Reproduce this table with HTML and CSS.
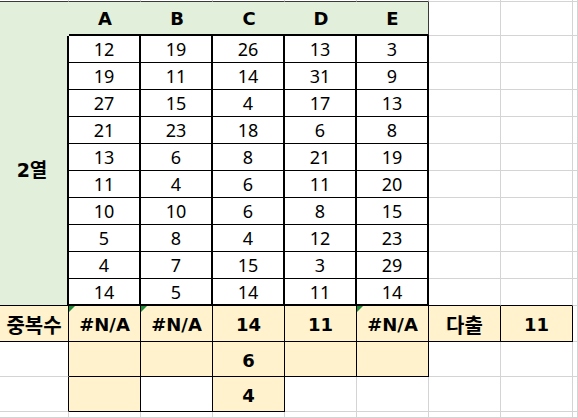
FILE: index.html
```html
<!DOCTYPE html>
<html lang="ko">
<head>
<meta charset="utf-8">
<title>Sheet</title>
<link rel="stylesheet" href="styles.css">
</head>
<body>
<div class="sheet">
  <!-- top strip -->
  <div class="c top dk"></div><div class="c top dk"></div><div class="c top dk"></div><div class="c top dk"></div><div class="c top dk"></div><div class="c top dk"></div><div class="c top"></div><div class="c top"></div><div class="c top"></div>
  <!-- header -->
  <div class="c g hl"></div>
  <div class="c g hd">A</div><div class="c g hd">B</div><div class="c g hd">C</div><div class="c g hd">D</div><div class="c g hd hde">E</div>
  <div class="c"></div><div class="c"></div><div class="c"></div>
  <!-- data rows -->
  <div class="c g lab">2열</div>
  <div class="c d">12</div><div class="c d">19</div><div class="c d">26</div><div class="c d">13</div><div class="c d">3</div><div class="c"></div><div class="c"></div><div class="c"></div>
  <div class="c d">19</div><div class="c d">11</div><div class="c d">14</div><div class="c d">31</div><div class="c d">9</div><div class="c"></div><div class="c"></div><div class="c"></div>
  <div class="c d">27</div><div class="c d">15</div><div class="c d">4</div><div class="c d">17</div><div class="c d">13</div><div class="c"></div><div class="c"></div><div class="c"></div>
  <div class="c d">21</div><div class="c d">23</div><div class="c d">18</div><div class="c d">6</div><div class="c d">8</div><div class="c"></div><div class="c"></div><div class="c"></div>
  <div class="c d">13</div><div class="c d">6</div><div class="c d">8</div><div class="c d">21</div><div class="c d">19</div><div class="c"></div><div class="c"></div><div class="c"></div>
  <div class="c d">11</div><div class="c d">4</div><div class="c d">6</div><div class="c d">11</div><div class="c d">20</div><div class="c"></div><div class="c"></div><div class="c"></div>
  <div class="c d">10</div><div class="c d">10</div><div class="c d">6</div><div class="c d">8</div><div class="c d">15</div><div class="c"></div><div class="c"></div><div class="c"></div>
  <div class="c d">5</div><div class="c d">8</div><div class="c d">4</div><div class="c d">12</div><div class="c d">23</div><div class="c"></div><div class="c"></div><div class="c"></div>
  <div class="c d">4</div><div class="c d">7</div><div class="c d">15</div><div class="c d">3</div><div class="c d">29</div><div class="c"></div><div class="c"></div><div class="c"></div>
  <div class="c d dl">14</div><div class="c d dl">5</div><div class="c d dl">14</div><div class="c d dl">11</div><div class="c d dl">14</div><div class="c bb"></div><div class="c bb"></div><div class="c"></div>
  <!-- summary row -->
  <div class="c y kor">중복수</div>
  <div class="c y err">#N/A</div><div class="c y err">#N/A</div><div class="c y">14</div><div class="c y">11</div><div class="c y err">#N/A</div>
  <div class="c y kor">다출</div><div class="c y">11</div><div class="c"></div>
  <!-- extra rows -->
  <div class="c rb"></div>
  <div class="c y"></div><div class="c y"></div><div class="c y">6</div><div class="c y"></div><div class="c y"></div>
  <div class="c"></div><div class="c"></div><div class="c"></div>
  <div class="c rb"></div>
  <div class="c y"></div><div class="c bx"></div><div class="c y">4</div><div class="c"></div><div class="c"></div>
  <div class="c"></div><div class="c"></div><div class="c"></div>
  <div class="c"></div><div class="c"></div><div class="c"></div><div class="c"></div><div class="c"></div><div class="c"></div><div class="c"></div><div class="c"></div><div class="c"></div>
</div>
</body>
</html>
```
FILE: styles.css
```css
html, body {
  margin: 0;
  padding: 0;
  background: #ffffff;
  overflow: hidden;
}

.sheet {
  display: grid;
  grid-template-columns: 69px repeat(7, 72px) 1fr;
  grid-template-rows: 2px 34px repeat(10, 27px) 36px 35px 35px 6px;
  width: 578px;
  font-family: "Noto Sans", "Noto Sans CJK KR", sans-serif;
  font-size: 18px;
  line-height: 1;
  color: #000;
}

.c {
  box-sizing: border-box;
  border-right: 1px solid #d4d4d4;
  border-bottom: 1px solid #d4d4d4;
  display: flex;
  align-items: center;
  justify-content: center;
  position: relative;
  min-width: 0;
}

.top.dk {
  border-bottom-color: #3a3a3a;
}

.g {
  background: #e2efda;
}

.hl {
  border-right: 0;
  border-bottom: 0;
}

.hd {
  border-right: 0;
  border-bottom: 2px solid #000;
  align-items: flex-end;
  padding-bottom: 6px;
  font-family: "DejaVu Sans", sans-serif;
  font-weight: 700;
  font-size: 18px;
}

.hde {
  border-right: 1px solid #3a3a3a;
}

.lab {
  grid-row: span 10;
  border-right: 2px solid #000;
  border-bottom: 1px solid #000;
  font-family: "DejaVu Sans", "Noto Sans CJK KR", sans-serif;
  font-weight: 700;
  font-size: 19px;
  padding-right: 3px;
}

.d {
  border-right: 2px solid #000;
  border-bottom: 1px solid #000;
}

.d.dl {
  border-bottom: 2px solid #000;
}

.bb {
  border-bottom-color: #000;
}

.y {
  background: #fff2cc;
  border-right-color: #000;
  border-bottom-color: #000;
  font-family: "DejaVu Sans", "Noto Sans CJK KR", sans-serif;
  font-weight: 700;
  padding-top: 3px;
}

.kor {
  font-family: "Noto Sans CJK KR", sans-serif;
  font-size: 20px;
  padding-top: 2px;
}

.err::before {
  content: "";
  position: absolute;
  top: 0;
  left: 0;
  width: 0;
  height: 0;
  border-top: 6px solid #1f8a3a;
  border-right: 6px solid transparent;
}

.rb {
  border-right-color: #000;
}

.bx {
  border-right-color: #000;
  border-bottom-color: #000;
}
```
